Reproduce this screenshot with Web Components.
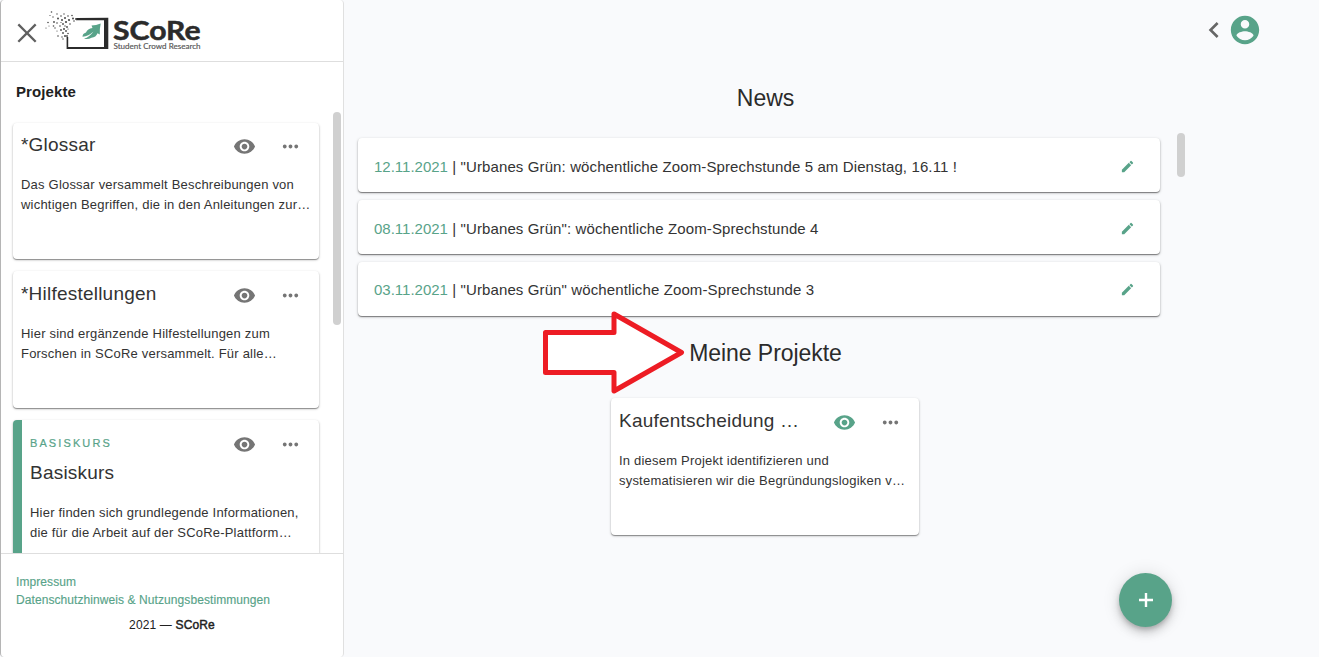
<!DOCTYPE html>
<html lang="de">
<head>
<meta charset="utf-8">
<title>SCoRe</title>
<style>
html,body{margin:0;height:100%;overflow:hidden}
body{background:#f9fafc;font-family:"Liberation Sans",Arial,sans-serif;color:#212121;--green:#58a389;--shadow:0 1px 1px rgba(0,0,0,.36),0 1px 3px rgba(0,0,0,.2)}
</style>
</head>
<body>
<score-app></score-app>
<script>
const define=(name,html,setup)=>customElements.define(name,class extends HTMLElement{
  constructor(){
    super();
    const t=document.createElement('template');
    t.innerHTML=html;
    this.attachShadow({mode:'open'}).appendChild(t.content.cloneNode(true));
  }
  connectedCallback(){ if(setup) setup(this,this.shadowRoot); }
});
const icons={
  eye:'M12 4.5C7 4.5 2.73 7.61 1 12c1.73 4.39 6 7.5 11 7.5s9.27-3.11 11-7.5c-1.73-4.39-6-7.5-11-7.5zM12 17c-2.76 0-5-2.24-5-5s2.24-5 5-5 5 2.24 5 5-2.24 5-5 5zm0-8c-1.66 0-3 1.34-3 3s1.34 3 3 3 3-1.34 3-3-1.34-3-3-3z',
  more:'M6 10c-1.1 0-2 .9-2 2s.9 2 2 2 2-.9 2-2-.9-2-2-2zm12 0c-1.1 0-2 .9-2 2s.9 2 2 2 2-.9 2-2-.9-2-2-2zm-6 0c-1.1 0-2 .9-2 2s.9 2 2 2 2-.9 2-2-.9-2-2-2z',
  edit:'M3 17.25V21h3.75L17.81 9.94l-3.75-3.75L3 17.25zM20.71 7.04a1 1 0 0 0 0-1.41l-2.34-2.34a1 1 0 0 0-1.41 0l-1.83 1.83 3.75 3.75 1.83-1.83z',
  add:'M19 13.200h-5.800v5.800h-2.400v-5.800H5v-2.400h5.800V5h2.400v5.800h5.800v2.400z',
  back:'M15.41 7.41L14 6l-6 6 6 6 1.41-1.41L10.83 12z',
  close:'M19.600 5.700L18.300 4.400 12 10.700 5.700 4.400 4.400 5.700 10.700 12 4.400 18.300 5.700 19.600 12 13.300 18.300 19.600 19.600 18.300 13.300 12z',
  user:'M12 2C6.48 2 2 6.48 2 12s4.48 10 10 10 10-4.48 10-10S17.52 2 12 2zm0 3c1.66 0 3 1.34 3 3s-1.34 3-3 3-3-1.34-3-3 1.34-3 3-3zm0 14.2c-2.5 0-4.71-1.28-6-3.22.03-1.99 4-3.08 6-3.08 1.99 0 5.97 1.09 6 3.08-1.29 1.94-3.5 3.22-6 3.22z'
};
define('score-icon',`<style>:host{display:block;flex:none;width:var(--s,23px);height:var(--s,23px);color:#757575}svg{display:block;width:100%;height:100%}</style>
<svg viewBox="0 0 24 24"><path fill="currentColor"/></svg>`,(el,r)=>r.querySelector('path').setAttribute('d',icons[el.getAttribute('name')]));

define('score-logo',`<style>:host{display:block;width:158px;height:42px}svg{display:block}
.n{font:700 26px Lato,sans-serif;fill:#2b2b2b;stroke:#2b2b2b;stroke-width:.5px}.s{font:400 8px Lato,sans-serif;fill:#555;stroke:#555;stroke-width:.15px}</style>
<svg width="158" height="42" viewBox="45 10 158 42">
<path d="M76 18L108.300 17.800V49H66.600V37H68.200V47H104V20.300H76z" fill="#2b2b2b"/>
<path d="M82.500 36.800Q82.500 33.500 86 32.500Q87.500 28.500 92.500 28L91.500 25.500Q96 25.500 100.700 23.600Q99.500 29 99.800 34.500L97.500 33.300Q96 37.500 91.500 37.800Q88.500 39.600 84 38.800Q89.500 37 93.500 31.500Q88.500 36.200 82.500 36.800z" fill="#58a389"/>
<g class="d" fill="#4a4a4a"></g>
<text class="n" x="113" y="40" textLength="87.500" lengthAdjust="spacingAndGlyphs">SCoRe</text>
<text class="s" x="113.500" y="49" textLength="87" lengthAdjust="spacingAndGlyphs">Student Crowd Research</text></svg>`,(el,r)=>{
  const pts=[[51.500,12,.8],[50,15.500,.6],[48,22.500,.8],[46,28,.6],[49,26,.5],[53,17,.7],[54,22,.9],[53.500,26,.8],[57,14,.7],[58,18.500,1],[57,23,.8],[61,16,.8],[62,20,1],[60,26,.8],[64,14,.7],[65,18,1],[66,22,1.100],[63,24,.9],[68,16,.8],[69,20,1.100],[72,15.500,.8],[73,18.500,1],[70,24,.8],[61,30,.9],[57,31,.6],[64,29,1],[67,27,.9],[63,33,.9],[58,36,.8],[66,31,.9],[68,33.500,.8],[62,37,.7],[65,36,1],[74,21,.8],[61,22.500,.6],[55,28,.7],[68,29,.6],[63,39,.7],[65,26,.7],[67,36,.9],[76,19,1]];
  r.querySelector('.d').innerHTML=pts.map(p=>'<circle cx="'+p[0]+'" cy="'+p[1]+'" r="'+p[2]+'"/>').join('');
});

define('score-card',`<style>
:host{display:flex;box-sizing:border-box;height:137px;background:#fff;border-radius:4px;box-shadow:var(--shadow);overflow:hidden}
.bar{display:none;width:9px;background:var(--green)}
:host([accent]) .bar{display:block}
.in{flex:1;min-width:0;padding:var(--top,9px) 7px 0 8px}
:host([accent]) .in{padding-top:15px}
.top{display:flex;height:44px}
.t{flex:1;font-size:19px;line-height:27px;letter-spacing:.0115em;white-space:nowrap;color:#333}
:host([accent]) .top{height:68px}
.o{display:none;font-size:11px;line-height:17px;letter-spacing:2.1px;color:var(--green);-webkit-text-stroke:.2px var(--green);margin-bottom:7px}
:host([accent]) .o{display:block}
.ic{display:flex;gap:22.500px;padding:4px 10.500px 0 0}
:host([accent]) .ic{margin-top:-6px}
:host([live]) .eye{color:var(--green)}
p{margin:0;font-size:13px;line-height:20px;letter-spacing:.016em;color:#333}
</style><div class="bar"></div><div class="in"><div class="top"><div class="t"><div class="o"><slot name="over"></slot></div><slot name="title"></slot></div>
<div class="ic"><score-icon class="eye" name="eye"></score-icon><score-icon name="more"></score-icon></div></div><p><slot></slot></p></div>`);

define('score-sidebar',`<style>
:host{display:flex;flex-direction:column;box-sizing:border-box;width:344px;height:657px;background:#fff;border-left:1px solid #b5b5b5;border-right:1px solid #e0e0e0;border-radius:4px}
header{display:flex;align-items:center;height:61px;border-bottom:1px solid #dedede;box-sizing:content-box}
header score-icon{--s:30px;margin:5px 0 0 11px;color:#606060}
score-logo{margin:1px 0 0 3px}
h2{margin:0;padding:20px 0 0 15px;font-size:15px;line-height:20px;height:30px;letter-spacing:.1px}
.list{display:flex;height:441px;overflow:hidden}
.cards{flex:1;padding:11px 13px 0 12px;display:flex;flex-direction:column;gap:12px}
.cards score-card{flex:none;width:306px}
.cards score-card:nth-child(1){height:136px;--top:8px}
.bar{width:8px;height:213px;border-radius:4px;background:#d0d0d0;margin-right:2px}
footer{flex:1;border-top:1px solid #dedede;padding:19px 0 0 15px;font-size:12px;line-height:18px}
a{display:block;color:var(--green);letter-spacing:.08px;-webkit-text-stroke:.15px var(--green)}
.c{text-align:center;margin:7px 15px 0 0;letter-spacing:.15px}
b{font-weight:400;-webkit-text-stroke:.45px #212121}
</style>
<header><score-icon name="close"></score-icon><score-logo></score-logo></header>
<h2>Projekte</h2>
<div class="list"><div class="cards">
<score-card><span slot="title">*Glossar</span>Das Glossar versammelt Beschreibungen von<br>wichtigen Begriffen, die in den Anleitungen zur…</score-card>
<score-card><span slot="title">*Hilfestellungen</span>Hier sind ergänzende Hilfestellungen zum<br>Forschen in SCoRe versammelt. Für alle…</score-card>
<score-card accent><span slot="over">BASISKURS</span><span slot="title">Basiskurs</span>Hier finden sich grundlegende Informationen,<br>die für die Arbeit auf der SCoRe-Plattform…</score-card>
</div><div class="bar"></div></div>
<footer><a>Impressum</a><a>Datenschutzhinweis &amp; Nutzungsbestimmungen</a><div class="c">2021 — <b>SCoRe</b></div></footer>`);

define('score-news',`<style>:host{display:flex;align-items:center;height:54px;background:#fff;border-radius:4px;box-shadow:0 1px 1px rgba(0,0,0,.4),0 1px 3px rgba(0,0,0,.25);box-sizing:border-box;padding:var(--top,2px) 25px 0 16px;font-size:15px;white-space:nowrap;color:#333}
time{color:var(--green)}.x{flex:1}.m{letter-spacing:.115px}score-icon{--s:15px;color:var(--green);margin-top:var(--shift,0px)}</style>
<div class="x"><time><slot name="date"></slot></time><span class="m"> | <slot></slot></span></div><score-icon name="edit"></score-icon>`);

define('score-arrow',`<style>:host{display:block;position:absolute;left:540px;top:308px}svg{display:block}</style>
<svg width="148" height="90" viewBox="540 308 148 90"><path d="M545.500 332.500H614V314L681.500 352.500 614 391V372.500H545.500z" fill="#fff" stroke="#ed1c24" stroke-width="5" stroke-linejoin="round"/></svg>`);

define('score-app',`<style>
:host{display:flex;height:657px;position:relative}
main{width:843px;box-sizing:border-box;padding:83px 0 0 14px}
h1{margin:0 0 0 -14px;font-size:23px;line-height:30px;font-weight:400;text-align:center;color:#2b2b2b;letter-spacing:-.05px}
.news{display:flex;gap:17px;margin-top:20px}
.items{width:802px;padding-top:5px;display:flex;flex-direction:column;gap:8px}
.items score-news:last-child{--top:0px;--shift:1px}
.bar{width:8px;height:44px;border-radius:4px;background:#d0d0d0}
.p{margin-top:22px}
main>score-card{width:308px;margin:30px 0 0 253px}
.fab{width:53px;height:54px;border-radius:50%;background:var(--green);display:flex;align-items:center;justify-content:center;margin:38px 0 0 761px;box-shadow:0 3px 5px -1px rgba(0,0,0,.2),0 6px 10px rgba(0,0,0,.14),0 1px 18px rgba(0,0,0,.12)}
.fab score-icon{--s:24px;color:#fff;margin-top:-1px}
nav{display:flex;align-items:center;height:34px;margin:13px 0 0 11px}
.b{--s:32px;color:#666}.u{--s:34px;color:var(--green);margin-left:-2px}
</style>
<score-sidebar></score-sidebar>
<main><h1>News</h1><div class="news"><div class="items">
<score-news><span slot="date">12.11.2021</span>"Urbanes Grün: wöchentliche Zoom-Sprechstunde 5 am Dienstag, 16.11 !</score-news>
<score-news><span slot="date">08.11.2021</span>"Urbanes Grün": wöchentliche Zoom-Sprechstunde 4</score-news>
<score-news><span slot="date">03.11.2021</span>"Urbanes Grün" wöchentliche Zoom-Sprechstunde 3</score-news>
</div><div class="bar"></div></div>
<h1 class="p">Meine Projekte</h1>
<score-card live><span slot="title">Kaufentscheidung …</span>In diesem Projekt identifizieren und<br>systematisieren wir die Begründungslogiken v…</score-card>
<div class="fab"><score-icon name="add"></score-icon></div></main>
<nav><score-icon class="b" name="back"></score-icon><score-icon class="u" name="user"></score-icon></nav>
<score-arrow></score-arrow>`);
</script>
</body>
</html>
